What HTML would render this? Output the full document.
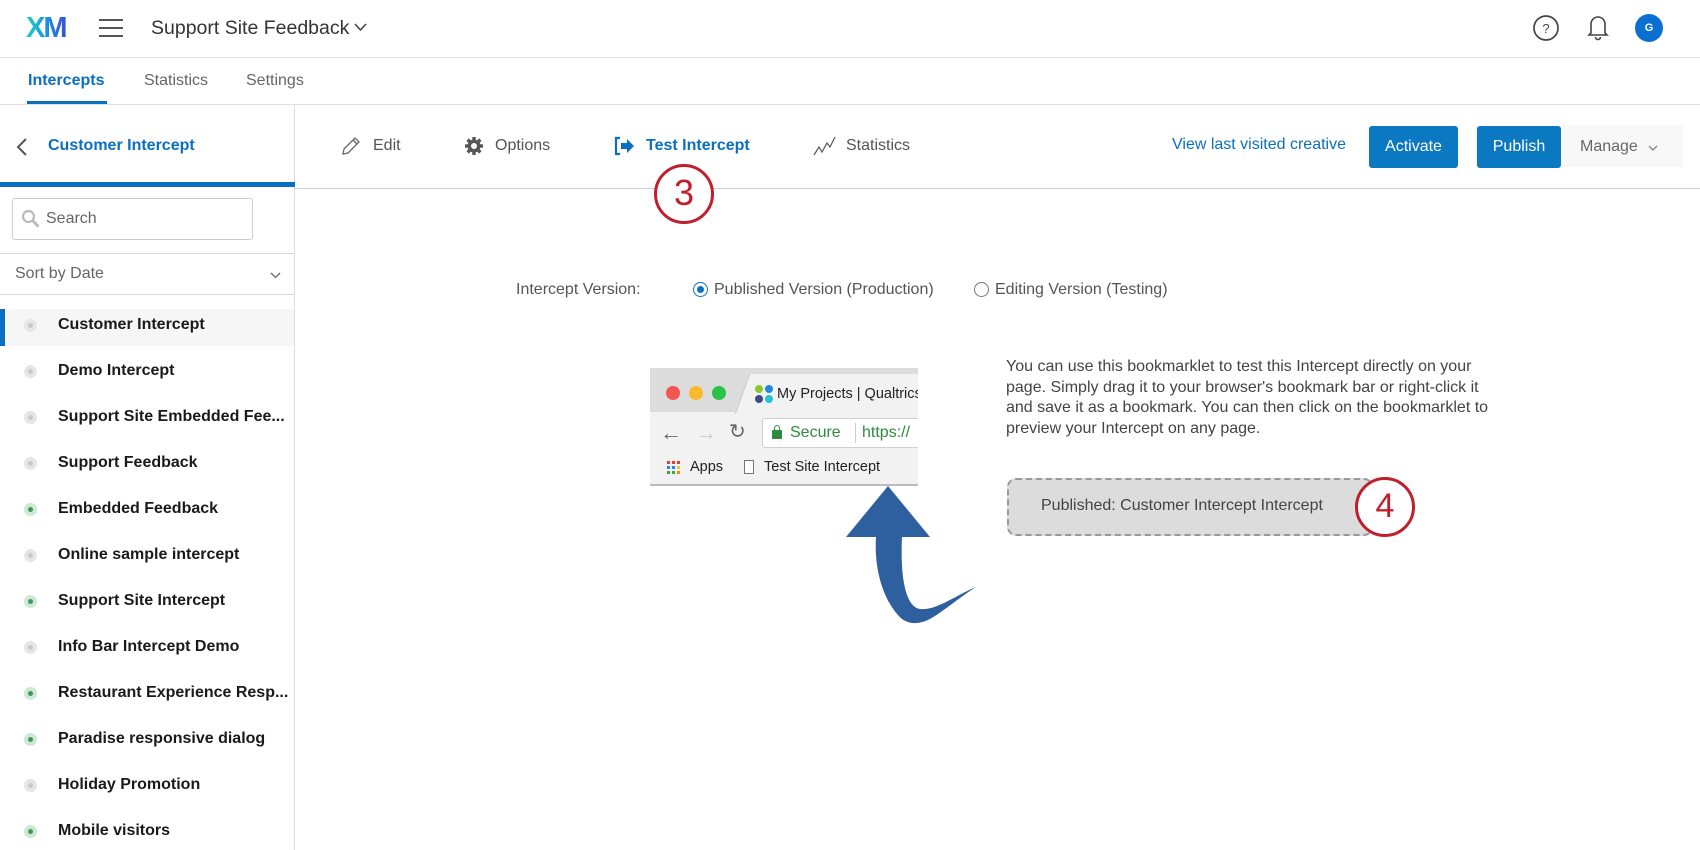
<!DOCTYPE html>
<html><head><meta charset="utf-8"><style>
*{margin:0;padding:0;box-sizing:border-box}
body{width:1700px;height:850px;overflow:hidden;background:#fff;font-family:"Liberation Sans",Arial,sans-serif;color:#333;position:relative}
.a{position:absolute;white-space:nowrap}
.hl{position:absolute;height:1px;background:#e2e2e2}
.item{position:absolute;left:0;width:294px;height:37px;font-weight:bold;font-size:16px;color:#1a1a1a}
.item .d{position:absolute;left:24px;top:12px;width:13px;height:13px;border-radius:50%;background:#e6e6e6}
.item .d::after{content:"";position:absolute;left:4px;top:4px;width:5px;height:5px;border-radius:50%;background:#c9c9c9}
.item .d.g{background:#cfe8d6}
.item .d.g::after{background:#3d9a5a}
.item span{position:absolute;left:58px;top:9px}
.tb{font-size:16px;color:#555;top:137px}
</style></head><body>
<!-- header -->
<div class="a" style="left:26px;top:12px;font-size:29px;font-weight:bold;letter-spacing:-2px;background:linear-gradient(90deg,#1fd1c6,#1a8ee6 55%,#3b4fd8);-webkit-background-clip:text;color:transparent">XM</div>
<div class="a" style="left:99px;top:19px;width:24px;height:2px;background:#555;box-shadow:0 8px 0 #555,0 16px 0 #555"></div>
<div class="a" style="left:151px;top:17px;font-size:19.5px;color:#333">Support Site Feedback</div>
<svg class="a" style="left:354px;top:23px" width="13" height="9"><path d="M1 1l5.5 6L12 1" fill="none" stroke="#444" stroke-width="1.6"/></svg>
<svg class="a" style="left:1532px;top:14px" width="28" height="28"><circle cx="14" cy="14" r="12" fill="none" stroke="#444" stroke-width="1.7"/><text x="14" y="19" text-anchor="middle" font-size="13" font-family="Liberation Sans" fill="#444">?</text></svg>
<svg class="a" style="left:1586px;top:13px" width="24" height="28"><path d="M5 20V11a7 7 0 0114 0v9l2 2H3z" fill="none" stroke="#444" stroke-width="1.6"/><path d="M9.5 24a2.5 2.5 0 005 0" fill="none" stroke="#444" stroke-width="1.6"/></svg>
<div class="a" style="left:1635px;top:14px;width:28px;height:28px;border-radius:50%;background:#0b6fd2;color:#fff;font-size:11px;font-weight:bold;text-align:center;line-height:28px">G</div>
<div class="hl" style="left:0;top:57px;width:1700px"></div>
<!-- tabs -->
<div class="a" style="left:28px;top:72px;font-size:16px;font-weight:bold;color:#0b6fc1">Intercepts</div>
<div class="a" style="left:27px;top:101px;width:80px;height:3px;background:#0b6fc1"></div>
<div class="a" style="left:144px;top:72px;font-size:16px;color:#666">Statistics</div>
<div class="a" style="left:246px;top:72px;font-size:16px;color:#666">Settings</div>
<div class="hl" style="left:0;top:104px;width:1700px"></div>
<!-- sidebar -->
<div class="a" style="left:294px;top:104px;width:1px;height:746px;background:#dcdcdc"></div>
<svg class="a" style="left:16px;top:137px" width="12" height="20"><path d="M10 2L2 10l8 8" fill="none" stroke="#555" stroke-width="2"/></svg>
<div class="a" style="left:48px;top:137px;font-size:16px;font-weight:bold;color:#0b6fc1">Customer Intercept</div>
<div class="a" style="left:0;top:182px;width:295px;height:5px;background:#0b6fc1"></div>
<div class="a" style="left:12px;top:198px;width:241px;height:42px;border:1px solid #ccc;border-radius:3px"></div>
<svg class="a" style="left:21px;top:209px" width="20" height="20"><circle cx="7.5" cy="7.5" r="5.5" fill="none" stroke="#bbb" stroke-width="2.2"/><path d="M11.5 11.5l6 6" stroke="#bbb" stroke-width="3"/></svg>
<div class="a" style="left:46px;top:210px;font-size:16px;color:#666">Search</div>
<div class="hl" style="left:0;top:253px;width:294px;background:#d6d6d6"></div>
<div class="a" style="left:15px;top:265px;font-size:16px;color:#666">Sort by Date</div>
<svg class="a" style="left:270px;top:272px" width="11" height="7"><path d="M1 1l4.5 4.5L10 1" fill="none" stroke="#666" stroke-width="1.3"/></svg>
<div class="hl" style="left:0;top:294px;width:294px;background:#d6d6d6"></div>
<div class="a" style="left:0;top:309px;width:294px;height:37px;background:#f6f6f6"></div>
<div class="a" style="left:0;top:309px;width:5px;height:37px;background:#0b6fc1"></div>
<div class="item" style="top:307px"><i class="d"></i><span>Customer Intercept</span></div>
<div class="item" style="top:353px"><i class="d"></i><span>Demo Intercept</span></div>
<div class="item" style="top:399px"><i class="d"></i><span>Support Site Embedded Fee...</span></div>
<div class="item" style="top:445px"><i class="d"></i><span>Support Feedback</span></div>
<div class="item" style="top:491px"><i class="d g"></i><span>Embedded Feedback</span></div>
<div class="item" style="top:537px"><i class="d"></i><span>Online sample intercept</span></div>
<div class="item" style="top:583px"><i class="d g"></i><span>Support Site Intercept</span></div>
<div class="item" style="top:629px"><i class="d"></i><span>Info Bar Intercept Demo</span></div>
<div class="item" style="top:675px"><i class="d g"></i><span>Restaurant Experience Resp...</span></div>
<div class="item" style="top:721px"><i class="d g"></i><span>Paradise responsive dialog</span></div>
<div class="item" style="top:767px"><i class="d"></i><span>Holiday Promotion</span></div>
<div class="item" style="top:813px"><i class="d g"></i><span>Mobile visitors</span></div>
<!-- toolbar -->
<svg class="a" style="left:340px;top:135px" width="22" height="22"><path d="M3 19l1-5L15 3l4 4L8 18z M13 5l4 4" fill="none" stroke="#666" stroke-width="1.3"/></svg>
<div class="a tb" style="left:373px">Edit</div>
<svg class="a" style="left:464px;top:136px" width="20" height="20" viewBox="0 0 20 20"><g fill="#555"><circle cx="10" cy="10" r="6.5"/><rect x="8.3" y="1" width="3.4" height="18"/><rect x="1" y="8.3" width="18" height="3.4"/><rect x="8.3" y="1" width="3.4" height="18" transform="rotate(45 10 10)"/><rect x="8.3" y="1" width="3.4" height="18" transform="rotate(-45 10 10)"/></g><circle cx="10" cy="10" r="3" fill="#fff"/></svg>
<div class="a tb" style="left:495px">Options</div>
<svg class="a" style="left:614px;top:136px" width="22" height="20"><path d="M6 2H2v16h4" fill="none" stroke="#0b6fc1" stroke-width="2.2"/><path d="M7 7h6V3l7 7-7 7v-4H7z" fill="#0b6fc1"/></svg>
<div class="a tb" style="left:646px;color:#0b6fc1;font-weight:bold">Test Intercept</div>
<svg class="a" style="left:813px;top:135px" width="24" height="22"><path d="M1 20l5-8 3 5 5-9 3 4 5-10" fill="none" stroke="#555" stroke-width="1.2"/></svg>
<div class="a tb" style="left:846px">Statistics</div>
<div class="a" style="left:1172px;top:136px;font-size:16px;color:#0b6fc1">View last visited creative</div>
<div class="a" style="left:1369px;top:126px;width:89px;height:42px;background:#0b78c2;border-radius:3px;color:#fff;font-size:16px;text-align:center;line-height:42px">Activate</div>
<div class="a" style="left:1477px;top:126px;width:84px;height:42px;background:#0b78c2;border-radius:3px;color:#fff;font-size:16px;text-align:center;line-height:42px">Publish</div>
<div class="a" style="left:1562px;top:125px;width:121px;height:42px;background:#f8f8f8"></div>
<div class="a" style="left:1580px;top:138px;font-size:16px;color:#666">Manage</div>
<svg class="a" style="left:1648px;top:145px" width="10" height="6"><path d="M1 1l4 4 4-4" fill="none" stroke="#777" stroke-width="1.2"/></svg>
<div class="hl" style="left:295px;top:188px;width:1405px;background:#d0d0d0"></div>
<!-- circle 3 -->
<div class="a" style="left:654px;top:164px;width:60px;height:60px;border:3.5px solid #c0202e;border-radius:50%;background:#fff;color:#c0202e;font-size:36px;text-align:center;line-height:52px">3</div>
<!-- version -->
<div class="a" style="left:516px;top:281px;font-size:16px;color:#555">Intercept Version:</div>
<div class="a" style="left:693px;top:282px;width:15px;height:15px;border-radius:50%;border:1px solid #0b6fc1;background:#fff"></div>
<div class="a" style="left:697px;top:286px;width:7px;height:7px;border-radius:50%;background:#0b6fc1"></div>
<div class="a" style="left:714px;top:281px;font-size:16px;color:#555">Published Version (Production)</div>
<div class="a" style="left:974px;top:282px;width:15px;height:15px;border-radius:50%;border:1px solid #777;background:#fff"></div>
<div class="a" style="left:995px;top:281px;font-size:16px;color:#555">Editing Version (Testing)</div>
<!-- browser image -->
<div class="a" style="left:650px;top:368px;width:268px;height:118px;background:#f2f2f2;border-bottom:2px solid #bbb;overflow:hidden">
 <div class="a" style="left:0;top:0;width:268px;height:44px;background:#dcdcdc"></div>
 <div class="a" style="left:92px;top:6px;width:190px;height:40px;background:#f2f2f2;transform:skewX(-20deg);border-left:1px solid #c8c8c8"></div>
 <div class="a" style="left:16px;top:18px;width:14px;height:14px;border-radius:50%;background:#f2564f"></div>
 <div class="a" style="left:39px;top:18px;width:14px;height:14px;border-radius:50%;background:#f9b92d"></div>
 <div class="a" style="left:62px;top:18px;width:14px;height:14px;border-radius:50%;background:#2bc24a"></div>
 <div class="a" style="left:105px;top:17px;width:8px;height:8px;border-radius:50%;background:#8ac926;box-shadow:10px 0 0 #1e88e5,0 10px 0 #3b4a8a,10px 10px 0 #23c4d6"></div>
 <div class="a" style="left:127px;top:18px;font-size:14.5px;color:#222">My Projects | Qualtrics</div>
 <div class="a" style="left:10px;top:54px;font-size:22px;color:#666;line-height:22px">&#8592;</div>
 <div class="a" style="left:45px;top:54px;font-size:22px;color:#ccc;line-height:22px">&#8594;</div>
 <div class="a" style="left:79px;top:53px;font-size:20px;color:#666;line-height:22px">&#8635;</div>
 <div class="a" style="left:112px;top:50px;width:170px;height:30px;background:#fff;border:1px solid #d0d0d0;border-radius:3px"></div>
 <div class="a" style="left:122px;top:62px;width:10px;height:9px;background:#2e8b3e;border-radius:1px"></div>
 <div class="a" style="left:124px;top:57px;width:6px;height:7px;border:1.5px solid #2e8b3e;border-bottom:none;border-radius:3px 3px 0 0"></div>
 <div class="a" style="left:140px;top:56px;font-size:16px;color:#2e8b3e">Secure</div>
 <div class="a" style="left:205px;top:55px;width:1px;height:20px;background:#ccc"></div>
 <div class="a" style="left:212px;top:56px;font-size:16px;color:#2e8b3e">https://</div>
 <div class="a" style="left:17px;top:93px;width:3px;height:3px;background:#e53935;box-shadow:5px 0 #e53935,10px 0 #e53935,0 5px #1e88e5,5px 5px #1e88e5,10px 5px #fbc02d,0 10px #43a047,5px 10px #43a047,10px 10px #fb8c00"></div>
 <div class="a" style="left:40px;top:91px;font-size:14.5px;color:#222">Apps</div>
 <div class="a" style="left:94px;top:92px;width:10px;height:14px;border:1px solid #777;background:#fff"></div>
 <div class="a" style="left:114px;top:91px;font-size:14.5px;color:#222">Test Site Intercept</div>
</div>
<!-- arrow -->
<svg class="a" style="left:840px;top:480px" width="140" height="145"><path d="M48 6L6 57h30c-2 30 6 60 22 78 8 10 20 10 32 4 14-8 30-22 46-32-20 8-40 24-56 22-14-2-20-30-18-72h28z" fill="#2e5f9e"/></svg>
<!-- paragraph -->
<div class="a" style="left:1006px;top:357px;font-size:16px;color:#444;line-height:20.5px;white-space:normal;width:560px">You can use this bookmarklet to test this Intercept directly on your<br>page. Simply drag it to your browser's bookmark bar or right-click it<br>and save it as a bookmark. You can then click on the bookmarklet to<br>preview your Intercept on any page.</div>
<div class="a" style="left:1007px;top:478px;width:366px;height:58px;background:#dcdcdc;border:2px dashed #999;border-radius:9px"></div>
<div class="a" style="left:1041px;top:497px;font-size:16px;color:#444">Published: Customer Intercept Intercept</div>
<div class="a" style="left:1355px;top:477px;width:60px;height:60px;border:3.5px solid #c0202e;border-radius:50%;background:#fff;color:#c0202e;font-size:34px;text-align:center;line-height:52px">4</div>
</body></html>
